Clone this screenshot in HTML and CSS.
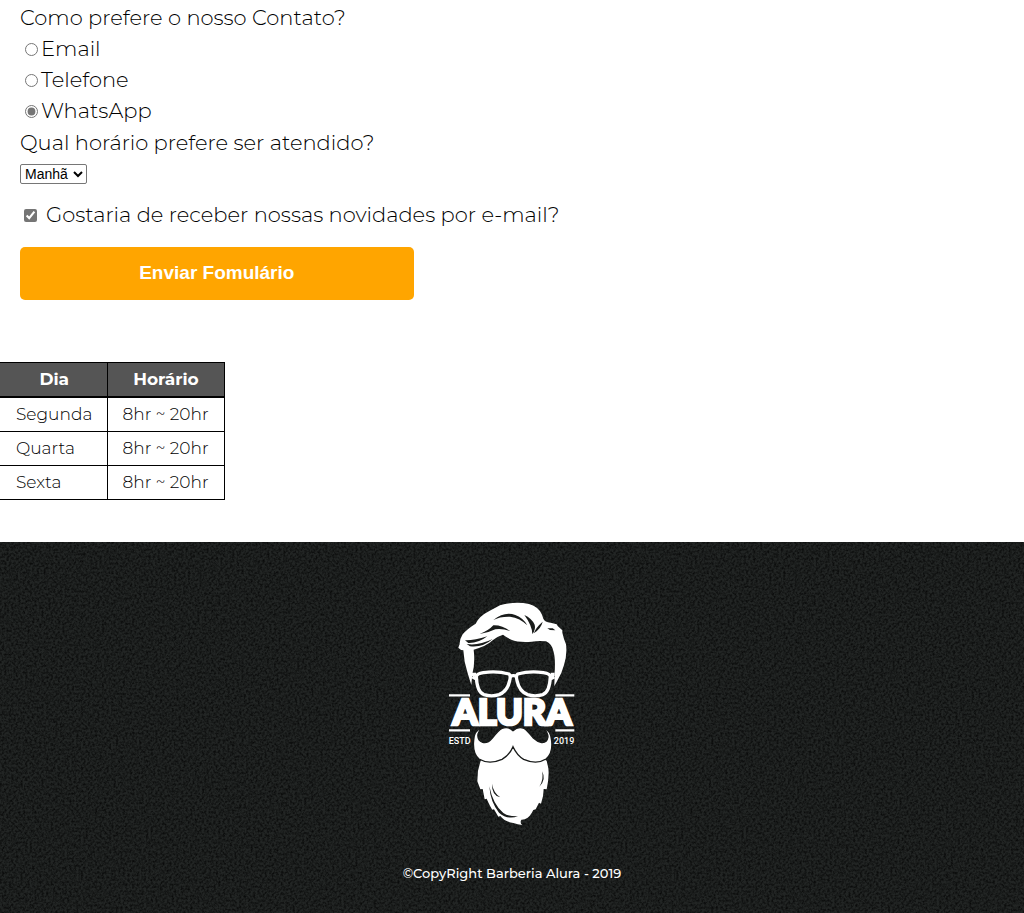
FILE: index.html
```html
<!DOCTYPE html>
<html lang="pt-br">
<head>
<meta charset="UTF-8">
<meta name="viewport" content="width=device-width, initial-scale=1">
<title>Contato - Barbearia Alura</title>
<link rel="stylesheet" href="styles.css">
</head>
<body>
<main>
  <form class="contact-form">
    <fieldset class="choices">
      <legend>Como prefere o nosso Contato?</legend>
      <label><input type="radio" name="contato" value="email">Email</label>
      <label><input type="radio" name="contato" value="telefone">Telefone</label>
      <label><input type="radio" name="contato" value="whatsapp" checked>WhatsApp</label>
    </fieldset>
    <label class="question" for="horario">Qual horário prefere ser atendido?</label>
    <select id="horario" class="period">
      <option>Manhã</option>
      <option>Tarde</option>
      <option>Noite</option>
    </select>
    <label class="newsletter"><input type="checkbox" checked>Gostaria de receber nossas novidades por e-mail?</label>
    <button class="submit" type="button">Enviar Fomulário</button>
  </form>

  <table class="schedule">
    <thead>
      <tr><th>Dia</th><th>Horário</th></tr>
    </thead>
    <tbody>
      <tr><td>Segunda</td><td>8hr ~ 20hr</td></tr>
      <tr><td>Quarta</td><td>8hr ~ 20hr</td></tr>
      <tr><td>Sexta</td><td>8hr ~ 20hr</td></tr>
    </tbody>
  </table>
</main>

<footer class="footer">
  <svg class="texture" aria-hidden="true">
    <filter id="grain" x="0" y="0" width="100%" height="100%" color-interpolation-filters="sRGB">
      <feTurbulence type="fractalNoise" baseFrequency="0.43" numOctaves="3" seed="9"/>
      <feColorMatrix values="0 0 0 0 0  0 0 0 0 0  0 0 0 0 0  2 0 0 0 -0.7"/>
    </filter>
    <rect width="100%" height="100%" filter="url(#grain)"/>
  </svg>
  <svg class="logo" viewBox="0 0 492 735" role="img" aria-label="Alura, estd 2019">
    <path class="white" d="M124 285 L120 272 L113 250 L104 215 L100 181 Q92 181 85 173 L89 162 Q88 150 98 133 Q112 116 137 101 Q148 78 178 63 L210 46 Q255 33 297 42 Q327 51 336 74 L340 86 Q344 96 362 98 L380 103 L383 108 L397 121 L397 128 Q401 146 408 163 Q412 194 402 225 Q396 249 381 274 L373 289 L374 245 Q377 205 370 183 Q365 161 348 154 Q327 151 305 155 Q265 158 244 149 Q232 144 219 134 Q204 138 188 151 Q169 169 131 179 Q136 218 127 252Z"/>
    <g class="dark">
      <path d="M190 90 Q224 63 256 75 Q280 84 292 106 Q270 84 240 80 Q210 79 190 90Z"/>
      <path d="M149 132 Q177 121 190 106 Q216 105 240 123 Q216 115 196 118 Q174 129 149 132Z"/>
      <path d="M105 151 Q132 152 172 139 Q145 160 115 159Z"/>
      <path d="M110 162 Q145 168 188 147 Q157 174 120 169Z"/>
      <path d="M283 75 Q305 85 314 104 Q318 118 307 132 Q306 106 283 75Z"/>
      <path d="M338 95 Q333 116 311 130 Q318 112 338 95Z"/>
      <path d="M352 115 L368 115 L376 121 L360 120Z"/>
    </g>
    <g class="frame">
      <path id="lens" d="M139 260 Q140 251 160 248 Q200 242 237 252 Q243 257 239 272 Q232 305 207 314 Q185 321 162 314 Q141 307 139 260Z"/>
      <use href="#lens" transform="matrix(-1 0 0 1 500 0)"/>
      <path d="M239 260 Q250 254 261 260 M126 253 L138 253 M374 253 L362 253 M127 260 L138 266 M373 260 L362 266"/>
    </g>
    <g class="bars"><path d="M57 316H120M376 316H433M57 421H120M376 421H433"/></g>
    <text class="wordmark" x="246" y="404" text-anchor="middle">ALURA</text>
    <text class="small" x="56" y="461">ESTD</text>
    <text class="small" x="433" y="461" text-anchor="end">2019</text>
    <path class="white" d="M152 512 L144 542 L142 574 L151 598 L158 597 L164 628 L170 626 Q181 651 187 659 L192 658 L205 680 L211 678 Q225 696 250 699 Q264 704 276 705 Q269 698 274 689 Q293 690 305 669 L310 660 L317 658 L327 638 L333 641 Q341 619 341 597 L350 598 Q358 560 355 535 L350 512 L249 450Z"/>
    <path class="mustache" d="M154 416 Q132 421 131 451 Q127 490 147 507 Q177 525 216 508 Q238 496 249 470 Q261 496 281 508 Q320 525 348 507 Q369 491 365 453 Q363 421 342 416 Q353 426 354 441 Q351 459 335 458 Q322 455 309 443 Q290 419 282 415 Q264 408 249 422 Q235 408 216 415 Q207 419 187 444 Q173 461 158 457 Q141 451 144 432 Q147 423 154 416Z"/>
    <g class="dark">
      <path d="M178 589 Q189 644 220 669 Q235 680 264 679 Q232 690 207 668 Q181 636 178 589Z"/>
      <path d="M186 581 Q190 608 211 622 Q185 617 186 581Z"/>
      <path d="M336 544 Q350 569 328 590 Q342 568 336 544Z"/>
    </g>
  </svg>
  <p class="copyright">©CopyRight Barberia Alura - 2019</p>
</footer>
</body>
</html>
```
FILE: styles.css
```css
* {
  box-sizing: border-box;
}

body {
  margin: 0;
  min-height: 100vh;
  display: flex;
  flex-direction: column;
  background: #fff;
  color: #000;
  font-family: Montserrat, Inter, sans-serif;
  font-weight: 300;
}

.contact-form {
  display: flex;
  flex-direction: column;
  align-items: flex-start;
  padding: 2px 20px 0;
  font-size: 21px;
  line-height: 31px;
}

.choices {
  margin: 0 0 1px;
  padding: 0;
  border: 0;
}

.choices legend {
  padding: 0;
}

.choices label {
  display: flex;
  align-items: center;
}

.choices input {
  margin: 2px 3px 0 5px;
}

input[type="radio"],
input[type="checkbox"] {
  width: 13px;
  height: 13px;
  accent-color: #757575;
}

.period {
  height: 20px;
  width: 67px;
  margin: 6px 0 15px;
  padding: 0;
  border: 1px solid #767676;
  border-radius: 2px;
  background: #fff;
  color: #000;
  font-family: "Liberation Sans", Arial, sans-serif;
  font-size: 14px;
}

.newsletter {
  display: flex;
  align-items: center;
}

.newsletter input {
  margin: 2px 9px 0 4px;
}

.submit {
  width: 40%;
  margin-top: 17px;
  padding: 15px 0 17px;
  border: 0;
  border-radius: 5px;
  background: orange;
  color: #fff;
  font-family: "Liberation Sans", Arial, sans-serif;
  font-size: 19px;
  font-weight: bold;
  line-height: 21px;
  cursor: pointer;
}

.schedule {
  margin: 62px 0 42px;
  border-collapse: collapse;
  font-size: 17px;
  line-height: 19px;
  white-space: nowrap;
}

.schedule th,
.schedule td {
  padding: 7px 14px 7px 15px;
  border: 1px solid #000;
}

.schedule th {
  width: 117px;
  border-bottom-width: 2px;
  background: #555;
  color: #fff;
  font-weight: 700;
}

.schedule th:first-child {
  width: 107px;
}

.schedule th:first-child,
.schedule td:first-child {
  padding-left: 16px;
  border-left: 0;
}

.footer {
  position: relative;
  flex: 1;
  display: flex;
  flex-direction: column;
  align-items: center;
  padding: 48px 0 30px;
  background: #222524;
  color: #fff;
}

.texture {
  position: absolute;
  inset: 0;
  width: 100%;
  height: 100%;
  opacity: 0.7;
}

.logo {
  position: relative;
  width: 164px;
  height: 245px;
}

.white {
  fill: #fff;
}

.dark {
  fill: #191b1a;
}

.frame {
  fill: none;
  stroke: #fff;
  stroke-width: 10;
}

.bars {
  stroke: #fff;
  stroke-width: 7;
}

.mustache {
  fill: #fff;
  stroke: #191b1a;
  stroke-width: 4;
}

.wordmark {
  fill: #fff;
  stroke: #fff;
  stroke-width: 8;
  font-family: Lato, sans-serif;
  font-size: 108px;
  font-weight: 900;
}

.small {
  fill: #fff;
  font-family: Roboto, sans-serif;
  font-size: 27px;
  font-weight: 500;
}

.copyright {
  position: relative;
  margin: 29px 0 0;
  font-size: 13px;
  font-weight: 500;
  line-height: 18px;
}
```
